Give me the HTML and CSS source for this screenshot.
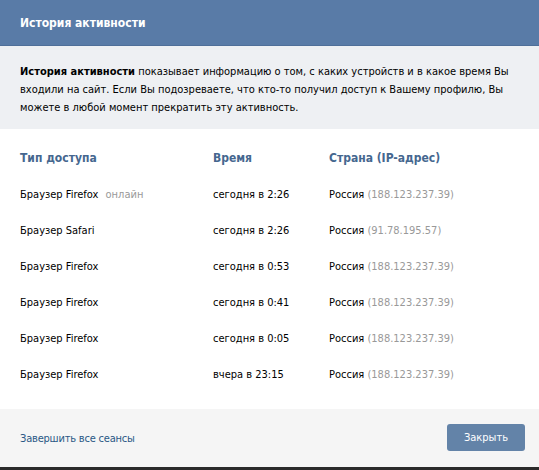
FILE: index.html
```html
<!DOCTYPE html>
<html lang="ru">
<head>
<meta charset="utf-8">
<title>История активности</title>
<link rel="stylesheet" href="styles.css">
</head>
<body>
<div class="box">
  <div class="header">История активности</div>
  <div class="intro"><b>История активности</b> показывает информацию о том, с каких устройств и в какое время Вы входили на сайт. Если Вы подозреваете, что кто-то получил доступ к Вашему профилю, Вы можете в любой момент прекратить эту активность.</div>
  <div class="table">
    <div class="th">Тип доступа</div><div class="th">Время</div><div class="th">Страна (IP-адрес)</div>
    <div class="td">Браузер Firefox <span class="online">онлайн</span></div><div class="td">сегодня в 2:26</div><div class="td">Россия <span class="ip">(188.123.237.39)</span></div>
    <div class="td">Браузер Safari</div><div class="td">сегодня в 2:26</div><div class="td">Россия <span class="ip">(91.78.195.57)</span></div>
    <div class="td">Браузер Firefox</div><div class="td">сегодня в 0:53</div><div class="td">Россия <span class="ip">(188.123.237.39)</span></div>
    <div class="td">Браузер Firefox</div><div class="td">сегодня в 0:41</div><div class="td">Россия <span class="ip">(188.123.237.39)</span></div>
    <div class="td">Браузер Firefox</div><div class="td">сегодня в 0:05</div><div class="td">Россия <span class="ip">(188.123.237.39)</span></div>
    <div class="td">Браузер Firefox</div><div class="td">вчера в 23:15</div><div class="td">Россия <span class="ip">(188.123.237.39)</span></div>
  </div>
  <div class="footer">
    <a class="end" href="#">Завершить все сеансы</a>
    <button class="btn">Закрыть</button>
  </div>
</div>
<div class="strip"></div>
</body>
</html>
```
FILE: styles.css
```css
html, body {
  margin: 0;
  padding: 0;
  background: #ffffff;
}
body {
  font-family: "DejaVu Sans Condensed", "DejaVu Sans", sans-serif;
  font-stretch: condensed;
  font-size: 11px;
  color: #000;
  width: 539px;
  height: 470px;
  overflow: hidden;
}
.box {
  display: flex;
  flex-direction: column;
}
.header {
  height: 45px;
  background: #597ba7;
  border-bottom: 1px solid #4f6f99;
  color: #fff;
  font-weight: bold;
  font-size: 12px;
  display: flex;
  align-items: center;
  padding-left: 20px;
}
.intro {
  background: #eef0f3;
  padding: 17px 30px 11px 20px;
  line-height: 18px;
  height: 55px;
}
.intro b {
  font-weight: bold;
}
.table {
  display: grid;
  grid-template-columns: 193px 116px 1fr;
  grid-auto-rows: 36px;
  padding: 11px 0 17px 20px;
  align-items: center;
  height: 252px;
}
.th {
  color: #45678f;
  font-weight: bold;
  font-size: 12px;
}
.online {
  color: #999;
  margin-left: 4px;
}
.ip {
  color: #999;
}
.footer {
  height: 58px;
  background: #f5f5f5;
  display: flex;
  align-items: center;
  justify-content: space-between;
  padding: 0 14px 0 20px;
}
.end {
  color: #2a5885;
  text-decoration: none;
  letter-spacing: -0.2px;
}
.btn {
  width: 78px;
  height: 27px;
  border: none;
  border-radius: 3px;
  background: #6383a8;
  color: #fff;
  font-family: "DejaVu Sans Condensed", "DejaVu Sans", sans-serif;
  font-stretch: condensed;
  font-size: 11px;
  padding: 0;
  margin-top: -1px;
}
.strip {
  height: 3px;
  background: #2b2b2b;
}
```
